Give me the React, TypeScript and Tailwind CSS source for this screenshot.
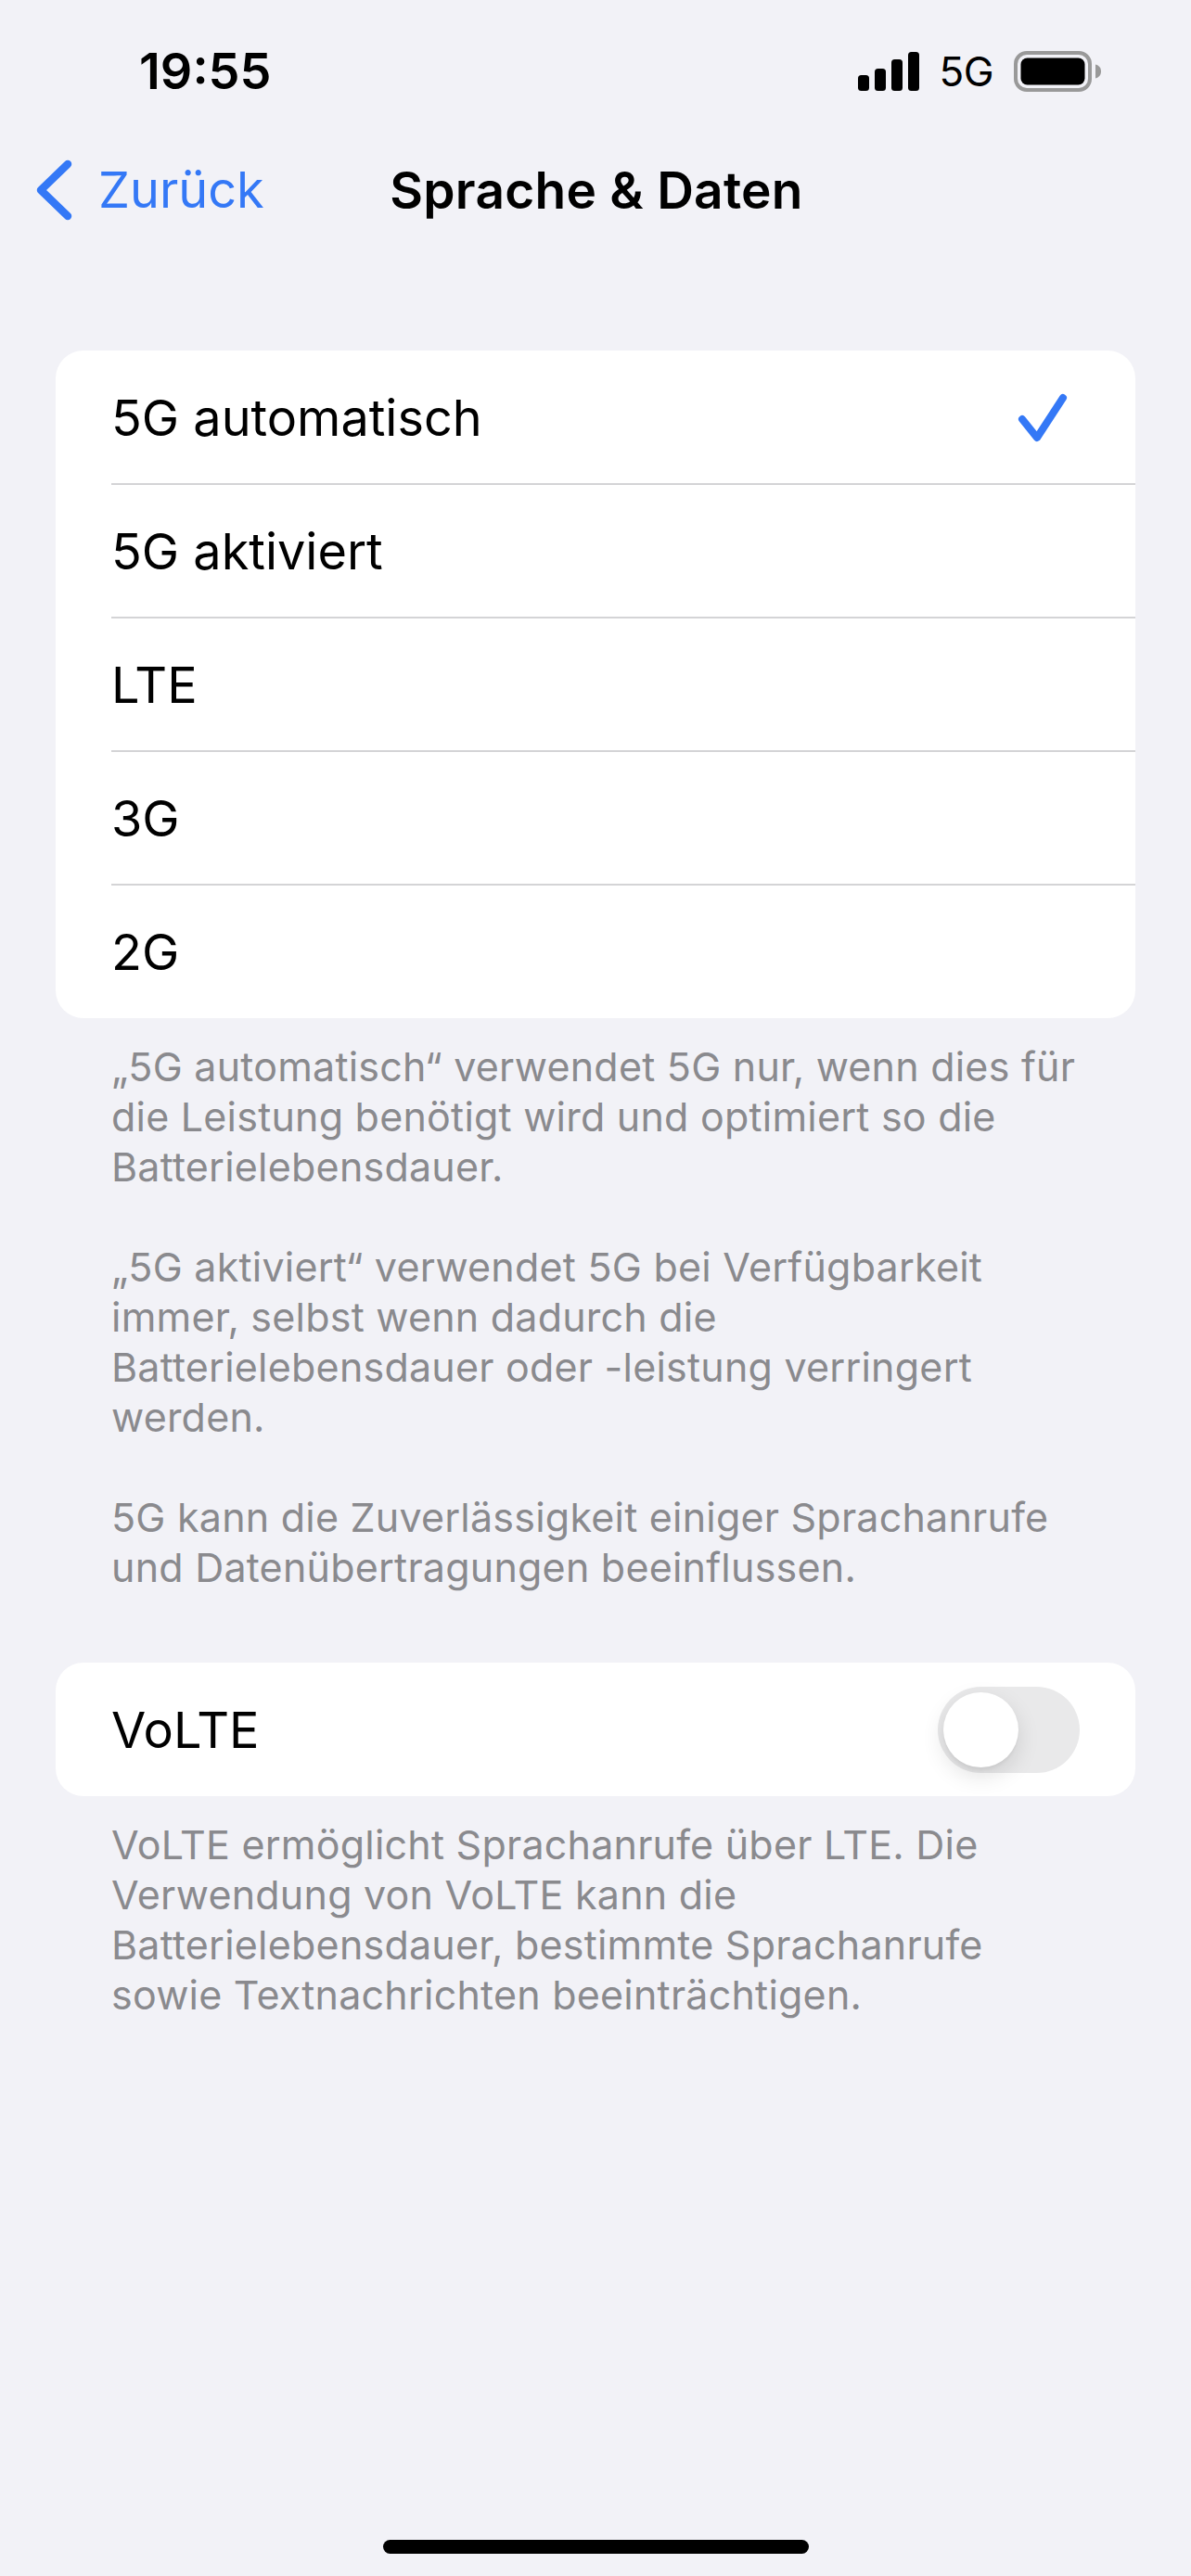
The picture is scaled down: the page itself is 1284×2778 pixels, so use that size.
const rows = ["5G automatisch", "5G aktiviert", "LTE", "3G", "2G"];

const notes = [
  ["„5G automatisch“ verwendet 5G nur, wenn dies für", "die Leistung benötigt wird und optimiert so die", "Batterielebensdauer."],
  ["„5G aktiviert“ verwendet 5G bei Verfügbarkeit", "immer, selbst wenn dadurch die", "Batterielebensdauer oder -leistung verringert", "werden."],
  ["5G kann die Zuverlässigkeit einiger Sprachanrufe", "und Datenübertragungen beeinflussen."],
];

const volteNote = [
  "VoLTE ermöglicht Sprachanrufe über LTE. Die",
  "Verwendung von VoLTE kann die",
  "Batterielebensdauer, bestimmte Sprachanrufe",
  "sowie Textnachrichten beeinträchtigen.",
];

function Note({ lines }: { lines: string[] }) {
  return (
    <p className="text-[43px] leading-[54px] text-[#8a8a8e] tracking-[0.22px] whitespace-nowrap">
      {lines.map((l) => (
        <span key={l} className="block">{l}</span>
      ))}
    </p>
  );
}

export default function App() {
  return (
    <div className="w-[1284px] h-[2778px] bg-[#f2f2f7] flex flex-col text-black font-['Inter','Liberation_Sans',sans-serif]">
      <header className="h-[152px] relative shrink-0">
        <div className="flex items-start justify-between pt-[49px] pl-[150px] pr-[97px]">
          <span className="text-[54px] leading-[56px] font-semibold">19:55</span>
          <div className="flex items-center pt-[6px] h-[49px]">
            <svg width="66" height="42" viewBox="0 0 66 42" fill="black" className="block">
              <rect x="0" y="25" width="12" height="17" rx="3.5" />
              <rect x="18" y="18" width="12" height="24" rx="3.5" />
              <rect x="36" y="8" width="12" height="34" rx="3.5" />
              <rect x="54" y="0" width="12" height="42" rx="3.5" />
            </svg>
            <span className="text-[44px] leading-[44px] font-normal ml-[21px] tracking-[-0.5px]">5G</span>
            <svg width="94" height="44" viewBox="0 0 94 44" className="block ml-[22px]">
              <rect x="2" y="2" width="80" height="40" rx="12" fill="none" stroke="#999999" strokeWidth="4" />
              <rect x="7.5" y="7.5" width="69" height="29" rx="7" fill="black" />
              <path d="M88 14.5 C92 15.5 94 18.5 94 22 C94 25.5 92 28.5 88 29.5 Z" fill="#999999" />
            </svg>
          </div>
        </div>
      </header>

      <nav className="h-[105px] shrink-0 relative flex items-center">
        <div className="flex items-center pl-[38px]">
          <svg width="42" height="66" viewBox="0 0 42 66" fill="none" className="block">
            <path d="M35 5 L6 33 L35 61" stroke="#3478f6" strokeWidth="8.5" strokeLinecap="round" strokeLinejoin="round" />
          </svg>
          <span className="text-[54px] leading-[60px] text-[#3478f6] ml-[26px]">Zurück</span>
        </div>
        <span className="absolute left-[2px] right-0 text-center text-[55px] leading-[60px] font-semibold tracking-[0.25px]">
          Sprache &amp; Daten
        </span>
      </nav>

      <main className="flex flex-col pt-[121px]">
        <section className="mx-[60px] bg-white rounded-[30px] overflow-hidden">
          {rows.map((r, i) => (
            <div key={r} className="relative h-[144px] pl-[60px] flex items-center justify-between">
              <span className="text-[54px] leading-[60px] pt-[2px]">{r}</span>
              {i === 0 && (
                <svg width="56" height="56" viewBox="0 0 56 56" fill="none" className="block mr-[72px]">
                  <path d="M6 30 L22 50 L50 7" stroke="#3478f6" strokeWidth="8" strokeLinecap="round" strokeLinejoin="round" />
                </svg>
              )}
              {i > 0 && <div className="absolute top-[-1px] left-[60px] right-0 h-[2px] bg-[#d4d4d6]" />}
            </div>
          ))}
        </section>

        <div className="pl-[120px] pt-[25px] flex flex-col gap-[54px]">
          {notes.map((n) => (
            <Note key={n[0]} lines={n} />
          ))}
        </div>

        <section className="mx-[60px] mt-[76px] h-[144px] bg-white rounded-[30px] pl-[60px] pr-[60px] flex items-center justify-between">
          <span className="text-[54px] leading-[60px] pt-[2px]">VoLTE</span>
          <div className="w-[153px] h-[93px] rounded-full bg-[#e9e9ea] p-[6px]">
            <div className="w-[81px] h-[81px] rounded-full bg-white shadow-[0_9px_24px_rgba(0,0,0,0.12),0_3px_3px_rgba(0,0,0,0.04)]" />
          </div>
        </section>

        <div className="pl-[120px] pt-[25px]">
          <Note lines={volteNote} />
        </div>
      </main>

      <div className="mt-auto pb-[24px] flex justify-center">
        <div className="w-[459px] h-[15px] rounded-full bg-black" />
      </div>
    </div>
  );
}
